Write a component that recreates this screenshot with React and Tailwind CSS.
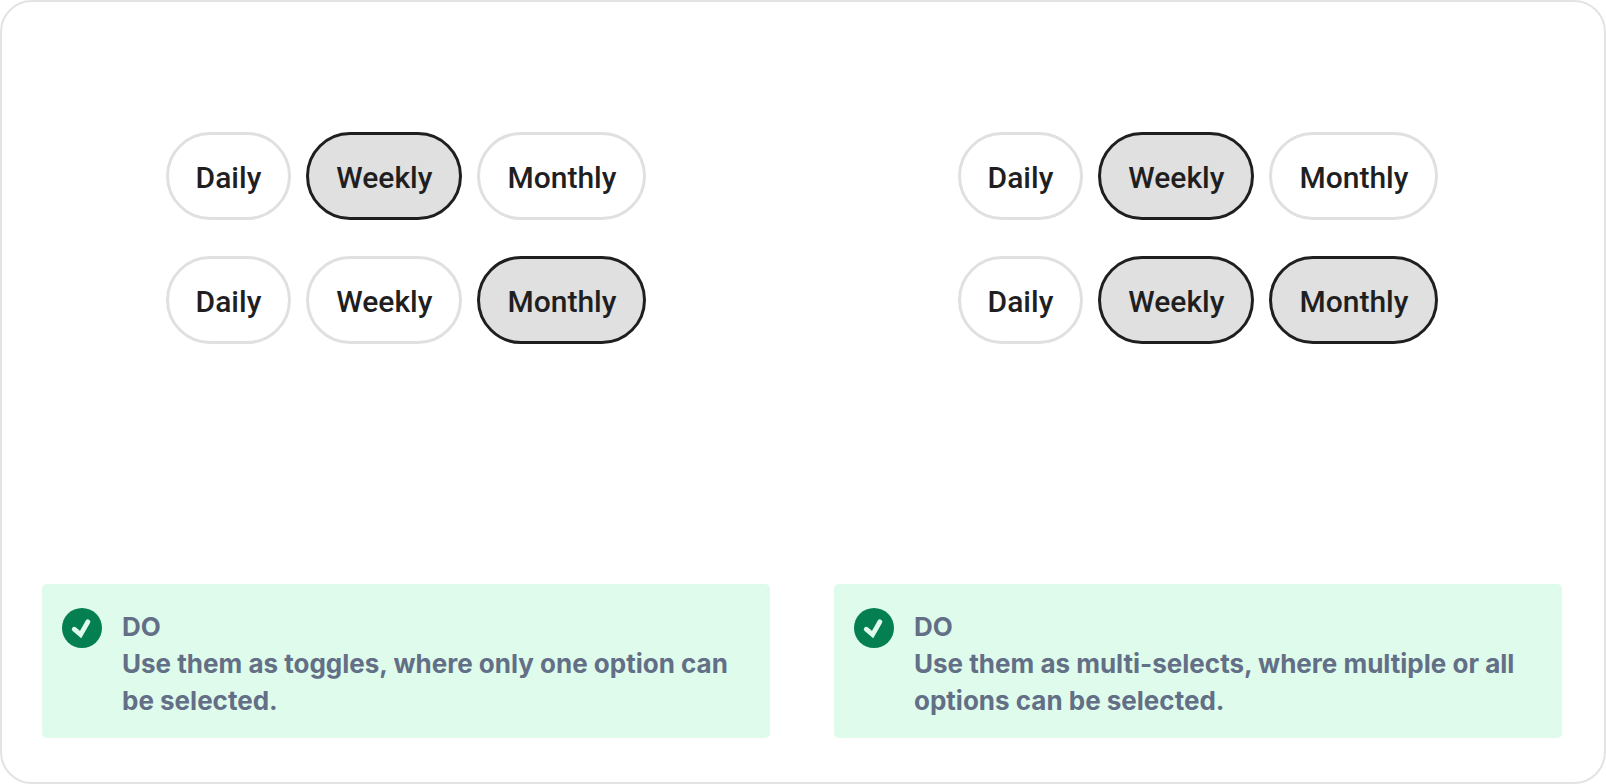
import { useState } from "react";

const OPTIONS = ["Daily", "Weekly", "Monthly"];

function Chip({ label, selected, onClick }) {
  const tone = selected
    ? "border-[#1f1f1f] bg-[#e0e0e0]"
    : "border-[#e0e0e0] bg-white";
  return (
    <button
      type="button"
      aria-pressed={selected}
      onClick={onClick}
      className={`h-22 rounded-full border-3 px-[27px] pt-0.5 font-['Roboto',sans-serif] text-[30px] font-medium text-[#1f1f1f] ${tone}`}
    >
      {label}
    </button>
  );
}

function ChipRow({ initial, multiple }) {
  const [selected, setSelected] = useState(initial);

  const choose = (label) => {
    if (!multiple) {
      setSelected([label]);
    } else if (selected.includes(label)) {
      setSelected(selected.filter((item) => item !== label));
    } else {
      setSelected([...selected, label]);
    }
  };

  return (
    <div role="group" aria-label="Frequency" className="flex gap-[15px]">
      {OPTIONS.map((label) => (
        <Chip
          key={label}
          label={label}
          selected={selected.includes(label)}
          onClick={() => choose(label)}
        />
      ))}
    </div>
  );
}

function CheckBadge() {
  return (
    <svg viewBox="0 0 40 40" className="size-10 shrink-0" aria-hidden="true">
      <circle cx="20" cy="20" r="20" fill="#037f51" />
      <path
        d="M12.2 21.2 18.6 26.6 25.9 13.8"
        fill="none"
        stroke="#e0faeb"
        strokeWidth="4.8"
        strokeLinecap="round"
        strokeLinejoin="miter"
      />
    </svg>
  );
}

function Example({ rows, multiple, children }) {
  return (
    <section className="flex flex-1 flex-col justify-between">
      <div className="flex flex-col gap-9 self-center">
        {rows.map((initial, index) => (
          <ChipRow key={index} initial={initial} multiple={multiple} />
        ))}
      </div>
      <div className="flex gap-5 rounded-[5px] bg-[#dffbeb] px-5 pt-6 pb-[19px] font-['Inter',sans-serif] text-[26px] leading-[37px] font-bold text-[#626f86]">
        <CheckBadge />
        <div>
          <h2>DO</h2>
          <p>{children}</p>
        </div>
      </div>
    </section>
  );
}

export default function App() {
  return (
    <main className="flex min-h-screen gap-16 rounded-[32px] border-2 border-[#e3e3e3] bg-white pt-[130px] pr-[42px] pb-11 pl-10">
      <Example rows={[["Weekly"], ["Monthly"]]}>
        Use them as toggles, where only one option can be selected.
      </Example>
      <Example rows={[["Weekly"], ["Weekly", "Monthly"]]} multiple>
        Use them as multi-selects, where multiple or all options can be
        selected.
      </Example>
    </main>
  );
}
